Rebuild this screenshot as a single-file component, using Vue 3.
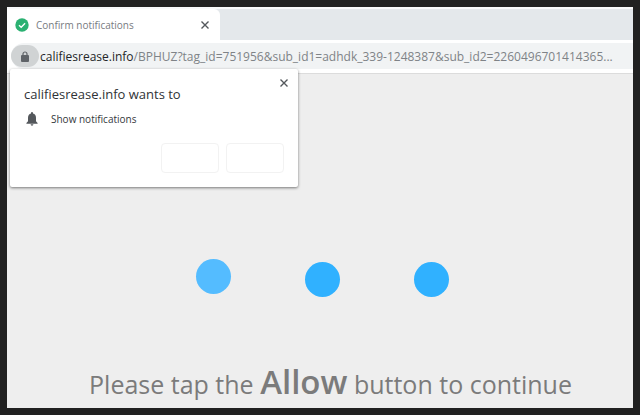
<template>
  <div class="screen">
    <div class="browser">
      <!-- Start of tab strip -->
      <header class="tab-strip">
        <div class="tab">
          <svg class="favicon" viewBox="0 0 14 14" aria-hidden="true">
            <circle cx="7" cy="7" r="6.7" fill="#2bb172" />
            <path d="M4 7.2 6.2 9.3 10.1 5.2" fill="none" stroke="#fff" stroke-width="1.3" />
          </svg>
          <span class="tab-title">Confirm notifications</span>
          <button class="icon-button" type="button" aria-label="Close tab">
            <svg class="close-icon" viewBox="0 0 10 10">
              <path d="M1.5 1.5 8.5 8.5M8.5 1.5 1.5 8.5" />
            </svg>
          </button>
        </div>
      </header>
      <!-- End of tab strip -->

      <!-- Start of address bar -->
      <div class="toolbar">
        <div class="address-bar">
          <button class="site-info" type="button" aria-label="View site information">
            <svg class="lock-icon" viewBox="0 0 8 11">
              <path d="M2 5V3a2 2 0 0 1 4 0v2" fill="none" stroke="#5f6368" stroke-width="1.2" />
              <rect x="0" y="4" width="8" height="7" rx="1" fill="#5f6368" />
            </svg>
          </button>
          <div class="url"><span class="host">{{ host }}</span>{{ path }}</div>
        </div>

        <!-- Start of permission popup -->
        <section v-if="popupOpen" class="popup" role="dialog" aria-labelledby="popup-title">
          <div class="popup-header">
            <h2 id="popup-title" class="popup-title">{{ host }} wants to</h2>
            <button class="icon-button" type="button" aria-label="Close" @click="popupOpen = false">
              <svg class="close-icon" viewBox="0 0 10 10">
                <path d="M1.5 1.5 8.5 8.5M8.5 1.5 1.5 8.5" />
              </svg>
            </button>
          </div>
          <div class="permission">
            <svg class="bell-icon" viewBox="0 0 12 14" aria-hidden="true">
              <path
                d="M6 0a1 1 0 0 0-1 1v.6C3 2.1 2 3.8 2 5.8V9.3L.4 10.9v.8h11.2v-.8L10 9.3V5.8C10 3.8 9 2.1 7 1.6V1a1 1 0 0 0-1-1zM4.6 12.3a1.4 1.4 0 0 0 2.8 0z"
                fill="#54585c" />
            </svg>
            <span>Show notifications</span>
          </div>
          <div class="actions">
            <button class="action-button" type="button" aria-label="Allow"></button>
            <button class="action-button" type="button" aria-label="Block"></button>
          </div>
        </section>
        <!-- End of permission popup -->
      </div>
      <!-- End of address bar -->

      <main class="page">
        <div class="dots">
          <span v-for="n in 3" :key="n" class="dot" :class="{ raised: n === 1 }"></span>
        </div>
        <p class="message">Please tap the <strong>Allow</strong> button to continue</p>
      </main>
    </div>
  </div>
</template>

<script setup>
import { ref } from 'vue';

const host = 'califiesrease.info';
const path = '/BPHUZ?tag_id=751956&sub_id1=adhdk_339-1248387&sub_id2=2260496701414365...';
const popupOpen = ref(true);
</script>

<style>
body {
  margin: 0;
  background-color: #212121;
}
</style>

<style scoped>
.screen {
  display: flex;
  box-sizing: border-box;
  min-height: 100vh;
  padding: 7px;
  background-color: #212121;
  font-family: "Open Sans", "Noto Sans", sans-serif;
}

.browser {
  display: flex;
  flex: 1;
  flex-direction: column;
  min-width: 0;
  background-color: #eee;
}

button {
  padding: 0;
  border: none;
  background: none;
  cursor: pointer;
}

.tab-strip {
  height: 31px;
  border-top: 2px solid #f8f9fa;
  background-color: #e4e8eb;
}

.tab {
  display: flex;
  align-items: center;
  box-sizing: border-box;
  width: 213px;
  height: 31px;
  padding: 0 10px 0 8px;
  border-top-right-radius: 6px;
  background-color: #fff;
}

.favicon {
  width: 14px;
  height: 14px;
  margin-right: 7px;
}

.tab-title {
  flex: 1;
  color: #777b7f;
  font-size: 10px;
  white-space: nowrap;
}

.icon-button {
  display: flex;
}

.close-icon {
  width: 10px;
  height: 10px;
  fill: none;
  stroke: #54585c;
  stroke-width: 1.4;
}

.toolbar {
  position: relative;
  padding: 3px 0 4px;
  border-bottom: 1px solid #dcdcdc;
  background-color: #fff;
}

.address-bar {
  display: flex;
  align-items: center;
  height: 26px;
  margin-left: 4px;
  border-radius: 13px 0 0 13px;
  background-color: #f1f3f4;
}

.site-info {
  display: flex;
  flex-shrink: 0;
  align-items: center;
  justify-content: center;
  width: 28px;
  height: 22px;
  border-radius: 11px;
  background-color: #d0d3d4;
}

.lock-icon {
  width: 8px;
  height: 11px;
}

.url {
  overflow: hidden;
  margin-left: 1px;
  color: #7f8387;
  font-size: 12px;
  white-space: nowrap;
}

.host {
  color: #242628;
}

.popup {
  position: absolute;
  top: 29px;
  left: 3px;
  box-sizing: border-box;
  width: 288px;
  padding: 9px 14px 14px;
  border-radius: 2px;
  background-color: #fff;
  box-shadow: 0 1px 3px rgba(0, 0, 0, 0.5);
}

.popup-header {
  display: flex;
  align-items: flex-start;
  justify-content: space-between;
  margin-right: -5px;
}

.popup-title {
  margin: 6px 0 0;
  color: #303336;
  font-size: 13px;
  font-weight: 400;
  line-height: 20px;
}

.permission {
  display: flex;
  align-items: center;
  margin-top: 6px;
  padding-left: 2px;
  color: #34383b;
  font-size: 10px;
  line-height: 18px;
}

.bell-icon {
  width: 12px;
  height: 14px;
  margin-right: 13px;
}

.actions {
  display: flex;
  justify-content: flex-end;
  gap: 7px;
  margin-top: 15px;
}

.action-button {
  width: 58px;
  height: 30px;
  border: 1px solid #f2f2f2;
  border-radius: 4px;
}

.page {
  display: flex;
  flex: 1;
  flex-direction: column;
  justify-content: space-between;
  align-items: center;
  padding: 185px 0 2px 5px;
}

.dots {
  display: flex;
  gap: 74px;
}

.dot {
  width: 35px;
  height: 35px;
  margin-top: 3px;
  border-radius: 50%;
  background-color: #30b1ff;
}

.dot.raised {
  margin-top: 0;
  background-color: #54bcff;
}

.message {
  margin: 0;
  padding-left: 16px;
  color: #7b7b7b;
  font-size: 25px;
  line-height: 44px;
  white-space: nowrap;
}

.message strong {
  font-size: 33px;
  font-weight: 600;
}
</style>
